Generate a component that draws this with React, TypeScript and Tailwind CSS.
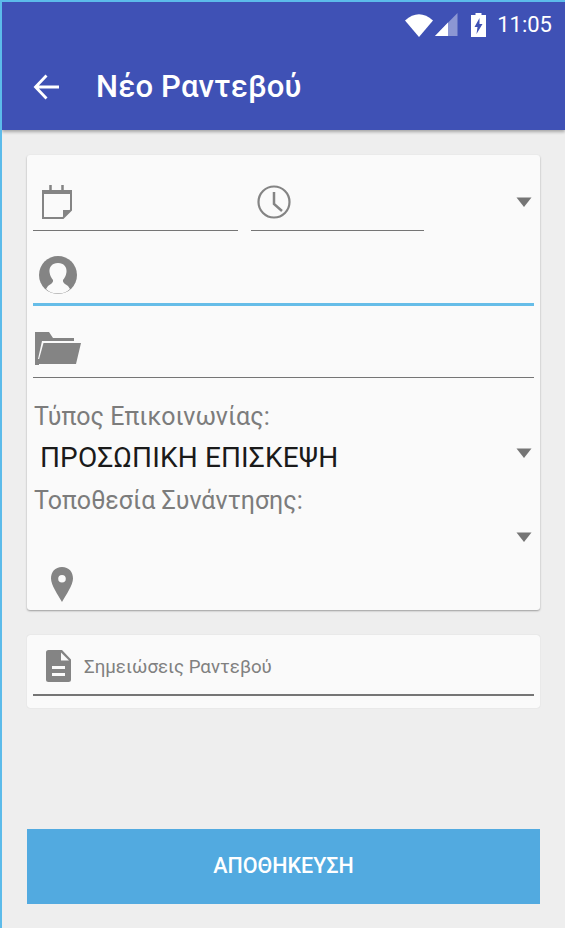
import React from "react";

const G = "#848484";

function Arrow() {
  return (
    <svg width="16" height="10" viewBox="0 0 16 10" className="block">
      <path d="M0.5 0.5H15.5L8 10Z" fill="#757575" />
    </svg>
  );
}

function StatusBar() {
  return (
    <div className="h-[46px] flex items-center justify-end pr-[13px] text-white">
      <svg width="28" height="24" viewBox="0 0 28 24">
        <path d="M0 7.500Q14 -5 28 7.500L14 24Z" fill="#fff" />
      </svg>
      <svg width="23" height="24" viewBox="0 0 23 24" className="ml-[2px]">
        <path d="M0 23L22.500 0V23Z" fill="#8c97d3" />
        <path d="M0 23L13 9.500V23Z" fill="#fff" />
      </svg>
      <svg width="15" height="24" viewBox="0 0 15 24" className="ml-[13px]">
        <path fillRule="evenodd" d="M4.500 0H10.500V2H15V24H0V2H4.500ZM8.500 5L3.500 14H6.500L5.500 21L11.500 11H8.500Z" fill="#fff" />
      </svg>
      <span className="ml-[11px] text-[22px] leading-none font-[Roboto,sans-serif]">11:05</span>
    </div>
  );
}

export default function App() {
  return (
    <div className="w-[565px] h-[928px] overflow-hidden bg-[#eeeeee] border-l-2 border-t-2 border-[#5cbbea] font-[Roboto,sans-serif]">
      <header className="h-[128px] bg-[#3f51b5] shadow-[0_2px_3px_rgba(0,0,0,0.3)] relative">
        <StatusBar />
        <div className="h-[82px] flex items-center pl-[31px] pb-[5px]">
          <svg width="26" height="26" viewBox="0 0 26 26" fill="none" stroke="#fff" strokeWidth="2.800">
            <path d="M26 13H2.500M13.500 1.500L2.500 13L13.500 24.500" />
          </svg>
          <h1 className="ml-[37px] text-[31px] leading-none font-medium text-white tracking-[0.2px]">Νέο Ραντεβού</h1>
        </div>
      </header>

      <main className="pl-[25px] pr-[25px] pt-[25px]">
        <section className="h-[455px] bg-[#fafafa] rounded-[3px] shadow-[0_1px_2px_rgba(0,0,0,0.35)] px-[6px]">
          <div className="h-[76px] flex items-start relative">
            <div className="w-[205px] h-[76px] border-b border-[#757575] pl-[9px] pt-[30px]">
              <svg width="30" height="34" viewBox="0 0 30 34">
                <path d="M8.500 0V6M20.500 0V6" stroke={G} strokeWidth="2.500" />
                <path d="M0 5H30V9H0Z" fill={G} />
                <path d="M1 8V33H21L29 25V8" fill="none" stroke={G} strokeWidth="2" />
                <path d="M21 33V25H29Z" fill={G} />
              </svg>
            </div>
            <div className="ml-[13px] w-[173px] h-[76px] border-b border-[#757575] pl-[6px] pt-[30px]">
              <svg width="34" height="34" viewBox="0 0 34 34" fill="none" stroke={G}>
                <circle cx="17" cy="17" r="15.500" strokeWidth="2.200" />
                <path d="M17 7V19L25 26" strokeWidth="2.500" />
              </svg>
            </div>
            <div className="ml-auto mr-[2px] mt-[42px]">
              <Arrow />
            </div>
          </div>

          <div className="h-[75px] border-b-[3px] border-[#66bde8] pl-[6px] pt-[25px]">
            <svg width="38" height="38" viewBox="0 0 38 38">
              <circle cx="19" cy="19" r="19" fill={G} />
              <path d="M19 7C13 7 10 11 10.500 16C11 20 12.500 22 14 24C14.500 26.500 12 28 9 30L7 33C10 36 14 37.500 19 37.500C24 37.500 28 36 31 33L29 30C26 28 23.500 26.500 24 24C25.500 22 27 20 27.500 16C28 11 25 7 19 7Z" fill="#fafafa" />
            </svg>
          </div>

          <div className="h-[72px] border-b border-[#757575] pl-[2px] pt-[26px]">
            <svg width="46" height="33" viewBox="0 0 46 33">
              <path d="M0 0H14L18 6H39V9H7L3 27H0Z" fill={G} />
              <path d="M8.500 11H46L41 32H2.500L3 31Z" fill={G} />
              <path d="M0 27H4V33H0Z" fill={G} />
            </svg>
          </div>

          <div className="pl-[1px] text-[25px] leading-[27px] text-[#7c7c7c] pt-[25px]">Τύπος Επικοινωνίας:</div>
          <div className="relative h-[56px] flex items-center pl-[7px]">
            <span className="text-[28px] leading-none text-[#1a1a1a] tracking-[0.15px]">ΠΡΟΣΩΠΙΚΗ ΕΠΙΣΚΕΨΗ</span>
            <div className="ml-auto mr-[2px] mb-[10px]">
              <Arrow />
            </div>
          </div>
          <div className="pl-[1px] text-[25px] leading-[27px] text-[#7c7c7c] mt-[1px]">Τοποθεσία Συνάντησης:</div>
          <div className="flex justify-end mr-[2px] mt-[18px]">
            <Arrow />
          </div>
          <div className="pl-[17px] mt-[25px]">
            <svg width="24" height="36" viewBox="0 0 24 36">
              <path fillRule="evenodd" d="M12 0C5 0 1 5 1 11.500C1 18 8 28 12 35C16 28 23 18 23 11.500C23 5 19 0 12 0ZM12 8A3.800 3.800 0 1 1 12 15.600A3.800 3.800 0 1 1 12 8Z" fill={G} />
            </svg>
          </div>
        </section>

        <section className="mt-[25px] h-[73px] bg-[#fafafa] rounded-[3px] shadow-[0_0_1px_rgba(0,0,0,0.2)] px-[6px] pt-[15px]">
          <div className="h-[46px] border-b-2 border-[#757575] flex items-start pl-[13px]">
            <svg width="25" height="32" viewBox="0 0 25 32">
              <path fillRule="evenodd" d="M2.500 0H16L25 9.500V29.500A2.500 2.500 0 0 1 22.500 32H2.500A2.500 2.500 0 0 1 0 29.500V2.500A2.500 2.500 0 0 1 2.500 0ZM15 2.500V10.500H23ZM6 16V19H19V16ZM6 23V26H19V23Z" fill={G} />
            </svg>
            <span className="ml-[13px] mt-[7px] text-[18.7px] leading-[20px] text-[#808080]">Σημειώσεις Ραντεβού</span>
          </div>
        </section>

        <button className="mt-[121px] w-[513px] h-[75px] bg-[#52aae0] text-white text-[21.500px] font-medium flex items-center justify-center">
          ΑΠΟΘΗΚΕΥΣΗ
        </button>
      </main>
    </div>
  );
}
